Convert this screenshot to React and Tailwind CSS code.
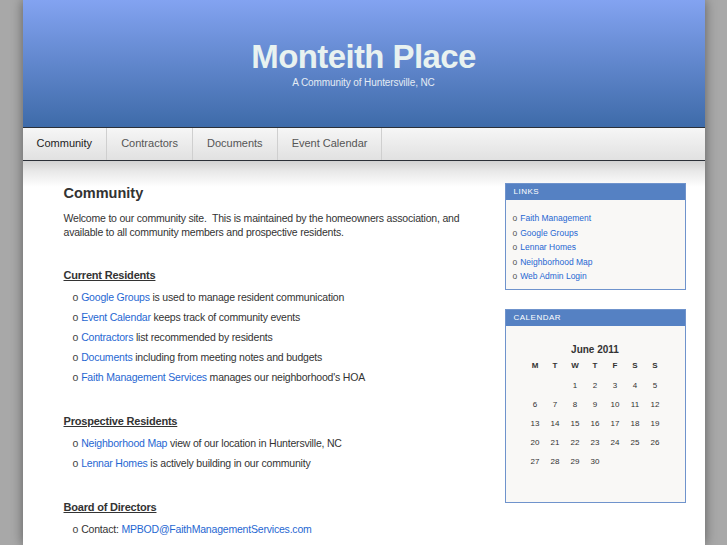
const font = { fontFamily: '"Liberation Sans", Arial, sans-serif' };

const tabs = ['Community', 'Contractors', 'Documents', 'Event Calendar'];

const sideLinks = [
  'Faith Management',
  'Google Groups',
  'Lennar Homes',
  'Neighborhood Map',
  'Web Admin Login',
];

const weeks = [
  ['', '', 1, 2, 3, 4, 5],
  [6, 7, 8, 9, 10, 11, 12],
  [13, 14, 15, 16, 17, 18, 19],
  [20, 21, 22, 23, 24, 25, 26],
  [27, 28, 29, 30, '', '', ''],
];

function A({ children }) {
  return <a href="#" className="text-[#1f67d2]">{children}</a>;
}

function Item({ children }) {
  return (
    <li className="flex pl-[9px] leading-[20px]">
      <span className="mr-[3px] text-[#444]">o</span>
      <span>{children}</span>
    </li>
  );
}

function Section({ title, children, top = 'mt-[27px]' }) {
  return (
    <div className={top}>
      <h3 className="text-[11px] font-bold leading-[14px] tracking-[-0.2px] text-[#333] underline">{title}</h3>
      <ul className="mt-[5px]">{children}</ul>
    </div>
  );
}

function Box({ title, children }) {
  return (
    <div className="border border-[#6f93cc] bg-[#f9f8f6]">
      <div className="bg-[#5581c3] px-[8px] text-[8px] leading-[16px] tracking-[0.5px] text-white">
        {title}
      </div>
      {children}
    </div>
  );
}

export default function App() {
  return (
    <div className="h-screen overflow-hidden bg-[#a8a8a8]" style={font}>
      <div className="mx-auto h-full w-[682px] bg-white shadow-[0_0_11px_rgba(0,0,0,0.45)]">
        <header className="flex h-[127px] flex-col items-center bg-gradient-to-b from-[#83a3f1] to-[#3e6ba9] pt-[37px]">
          <h1 className="text-[33px] font-bold leading-[40px] tracking-[-0.6px] text-[#e8f2f0]">
            Monteith Place
          </h1>
          <p className="text-[10px] leading-[12px] tracking-[-0.1px] text-[#e4ecf4]">
            A Community of Huntersville, NC
          </p>
        </header>

        <nav className="flex h-[34px] border-y border-[#2b3038] bg-gradient-to-b from-[#f6f6f6] to-[#e1e1e1]">
          {tabs.map((t, i) => (
            <a
              key={t}
              href="#"
              className={`flex items-center border-r border-[#cfcfcf] px-[14px] pb-[2px] text-[11px] ${
                i === 0 ? 'text-[#222]' : 'text-[#555]'
              }`}
            >
              {t}
            </a>
          ))}
        </nav>

        <div className="flex bg-[linear-gradient(#d2d2d2,#e8e8e8_10px,#fff_26px)]">
          <main className="w-[470px] shrink-0 pl-[41px] pt-[22px] text-[10.5px] tracking-[-0.2px] text-[#333]">
            <h2 className="text-[14.5px] font-bold leading-[20px] tracking-normal text-[#333]">Community</h2>
            <p className="mt-[8px] leading-[14px]">
              Welcome to our community site.&nbsp; This is maintained by the homeowners association, and
              available to all community members and prospective residents.
            </p>

            <Section title="Current Residents" top="mt-[29px]">
              <Item><A>Google Groups</A> is used to manage resident communication</Item>
              <Item><A>Event Calendar</A> keeps track of community events</Item>
              <Item><A>Contractors</A> list recommended by residents</Item>
              <Item><A>Documents</A> including from meeting notes and budgets</Item>
              <Item><A>Faith Management Services</A> manages our neighborhood&apos;s HOA</Item>
            </Section>

            <Section title="Prospective Residents">
              <Item><A>Neighborhood Map</A> view of our location in Huntersville, NC</Item>
              <Item><A>Lennar Homes</A> is actively building in our community</Item>
            </Section>

            <Section title="Board of Directors">
              <Item>Contact: <A>MPBOD@FaithManagementServices.com</A></Item>
              <Item>President: Tom Mondor</Item>
            </Section>
          </main>

          <aside className="ml-[12px] w-[181px] shrink-0 pt-[22px]">
            <Box title="LINKS">
              <ul className="pb-[5px] pl-[7px] pt-[11px] text-[8.5px] leading-[14.5px]">
                {sideLinks.map((l) => (
                  <li key={l}>
                    <span className="mr-[3px] text-[#555]">o</span>
                    <a href="#" className="text-[#1f67d2]">{l}</a>
                  </li>
                ))}
              </ul>
            </Box>

            <div className="mt-[19px]">
              <Box title="CALENDAR">
                <div className="h-[176px] pt-[17px]">
                  <table className="mx-auto text-[8px] text-[#333]">
                    <caption className="pb-[2px] text-[10px] font-bold leading-[14px] text-[#333]">
                      June 2011
                    </caption>
                    <thead>
                      <tr>
                        {['M', 'T', 'W', 'T', 'F', 'S', 'S'].map((d, i) => (
                          <th key={i} className="h-[15px] w-[20px] p-0 text-center font-bold">
                            {d}
                          </th>
                        ))}
                      </tr>
                    </thead>
                    <tbody>
                      {weeks.map((w, i) => (
                        <tr key={i}>
                          {w.map((d, j) => (
                            <td
                              key={j}
                              className={`w-[20px] p-0 text-center leading-[19px] ${i === 0 ? 'pt-[2px]' : ''}`}
                            >
                              {d}
                            </td>
                          ))}
                        </tr>
                      ))}
                    </tbody>
                  </table>
                </div>
              </Box>
            </div>
          </aside>
        </div>
      </div>
    </div>
  );
}
